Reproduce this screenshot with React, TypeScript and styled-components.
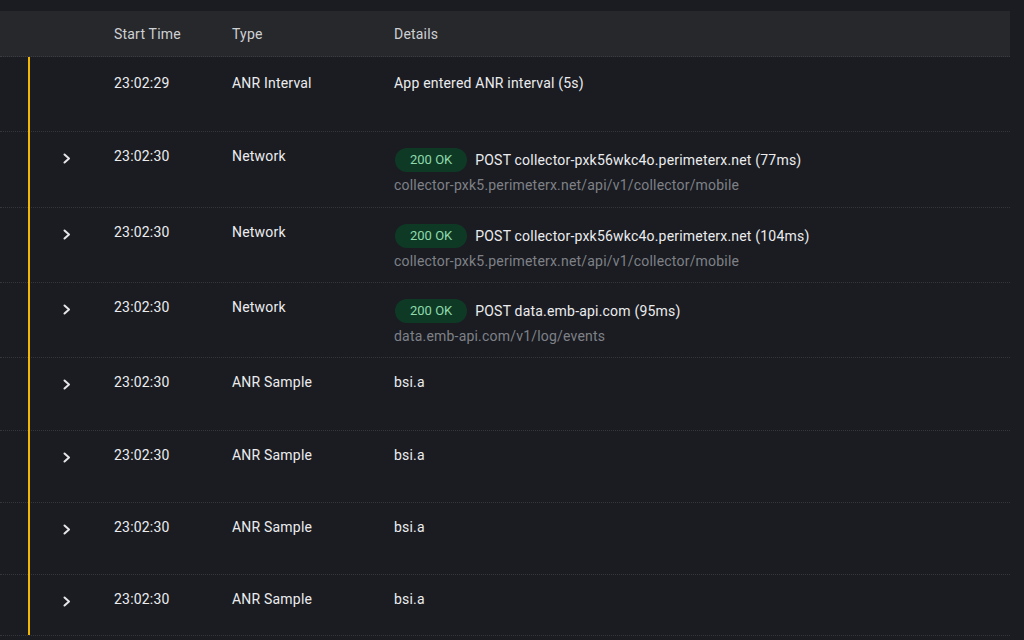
import React from 'react';
import styled, { createGlobalStyle } from 'styled-components';

const GlobalStyle = createGlobalStyle`
  html, body {
    margin: 0;
    padding: 0;
    background: #1a1c22;
    font-family: Roboto, "Liberation Sans", sans-serif;
    letter-spacing: 0.2px;
    -webkit-font-smoothing: antialiased;
  }
`;

const Page = styled.div`
  width: 1024px;
  height: 640px;
  padding: 11px 14px 0 0;
  box-sizing: border-box;
  background: #1a1c22;
  overflow: hidden;
`;

const Table = styled.div`
  position: relative;
  width: 1010px;
`;

const columns = '114px 118px 162px 1fr';

const HeaderRow = styled.div`
  display: grid;
  grid-template-columns: ${columns};
  height: 46px;
  align-items: center;
  background: #27282c;
  border-bottom: 1px dotted #3a3c42;
  box-sizing: border-box;
  font-size: 14px;
  color: #cfd0d3;
`;

const HeaderCell = styled.div``;

const Body = styled.div`
  position: relative;
`;

const Timeline = styled.div`
  position: absolute;
  left: 28px;
  top: 0;
  width: 2px;
  height: 578px;
  background: #f2b705;
`;

const Row = styled.div<{ $height: number; $top: number }>`
  display: grid;
  grid-template-columns: ${columns};
  align-items: start;
  height: ${p => p.$height}px;
  padding-top: ${p => p.$top}px;
  box-sizing: border-box;
  border-bottom: 1px dotted #33363d;
  font-size: 14px;
  line-height: 20px;
  color: #ececee;
`;

const ToggleCell = styled.div`
  display: flex;
  align-items: center;
  height: 20px;
  padding-left: 63px;
  margin-top: 2px;
`;

const Cell = styled.div``;

const DetailCell = styled.div<{ $offset: number }>`
  display: flex;
  flex-direction: column;
  margin-top: ${p => p.$offset}px;
`;

const MainLine = styled.div`
  display: flex;
  align-items: center;
  gap: 8px;
`;

const Badge = styled.span`
  display: inline-flex;
  align-items: center;
  height: 24px;
  margin-left: 1px;
  padding: 0 15px;
  border-radius: 12px;
  background: #0e3a25;
  color: #8fd9ab;
  font-size: 13px;
  letter-spacing: 0;
`;

const SubLine = styled.div`
  margin-top: 3px;
  color: #7f8187;
`;

const Chevron = () => (
  <svg width="8" height="11" viewBox="0 0 8 11" fill="none">
    <polyline
      points="1.5,1.5 6,5.5 1.5,9.5"
      stroke="#e6e6e8"
      strokeWidth="2"
      strokeLinecap="round"
      strokeLinejoin="round"
    />
  </svg>
);

type Event = {
  time: string;
  type: string;
  status?: string;
  text: string;
  url?: string;
  expandable: boolean;
  height: number;
};

const events: Event[] = [
  { time: '23:02:29', type: 'ANR Interval', text: 'App entered ANR interval (5s)', expandable: false, height: 75 },
  {
    time: '23:02:30', type: 'Network', status: '200 OK',
    text: 'POST collector-pxk56wkc4o.perimeterx.net (77ms)',
    url: 'collector-pxk5.perimeterx.net/api/v1/collector/mobile', expandable: true, height: 76,
  },
  {
    time: '23:02:30', type: 'Network', status: '200 OK',
    text: 'POST collector-pxk56wkc4o.perimeterx.net (104ms)',
    url: 'collector-pxk5.perimeterx.net/api/v1/collector/mobile', expandable: true, height: 75,
  },
  {
    time: '23:02:30', type: 'Network', status: '200 OK',
    text: 'POST data.emb-api.com (95ms)',
    url: 'data.emb-api.com/v1/log/events', expandable: true, height: 75,
  },
  { time: '23:02:30', type: 'ANR Sample', text: 'bsi.a', expandable: true, height: 73 },
  { time: '23:02:30', type: 'ANR Sample', text: 'bsi.a', expandable: true, height: 72 },
  { time: '23:02:30', type: 'ANR Sample', text: 'bsi.a', expandable: true, height: 72 },
  { time: '23:02:30', type: 'ANR Sample', text: 'bsi.a', expandable: true, height: 61 },
];

const App: React.FC = () => (
  <>
    <GlobalStyle />
    <Page>
      <Table>
        <HeaderRow>
          <HeaderCell />
          <HeaderCell>Start Time</HeaderCell>
          <HeaderCell>Type</HeaderCell>
          <HeaderCell>Details</HeaderCell>
        </HeaderRow>
        <Body>
          <Timeline />
          {events.map((ev, i) => (
            <Row key={i} $height={ev.height} $top={i === 0 ? 16 : 14}>
              <ToggleCell>{ev.expandable && <Chevron />}</ToggleCell>
              <Cell>{ev.time}</Cell>
              <Cell>{ev.type}</Cell>
              <DetailCell $offset={ev.status ? 2 : 0}>
                <MainLine>
                  {ev.status && <Badge>{ev.status}</Badge>}
                  <span>{ev.text}</span>
                </MainLine>
                {ev.url && <SubLine>{ev.url}</SubLine>}
              </DetailCell>
            </Row>
          ))}
        </Body>
      </Table>
    </Page>
  </>
);

export default App;
